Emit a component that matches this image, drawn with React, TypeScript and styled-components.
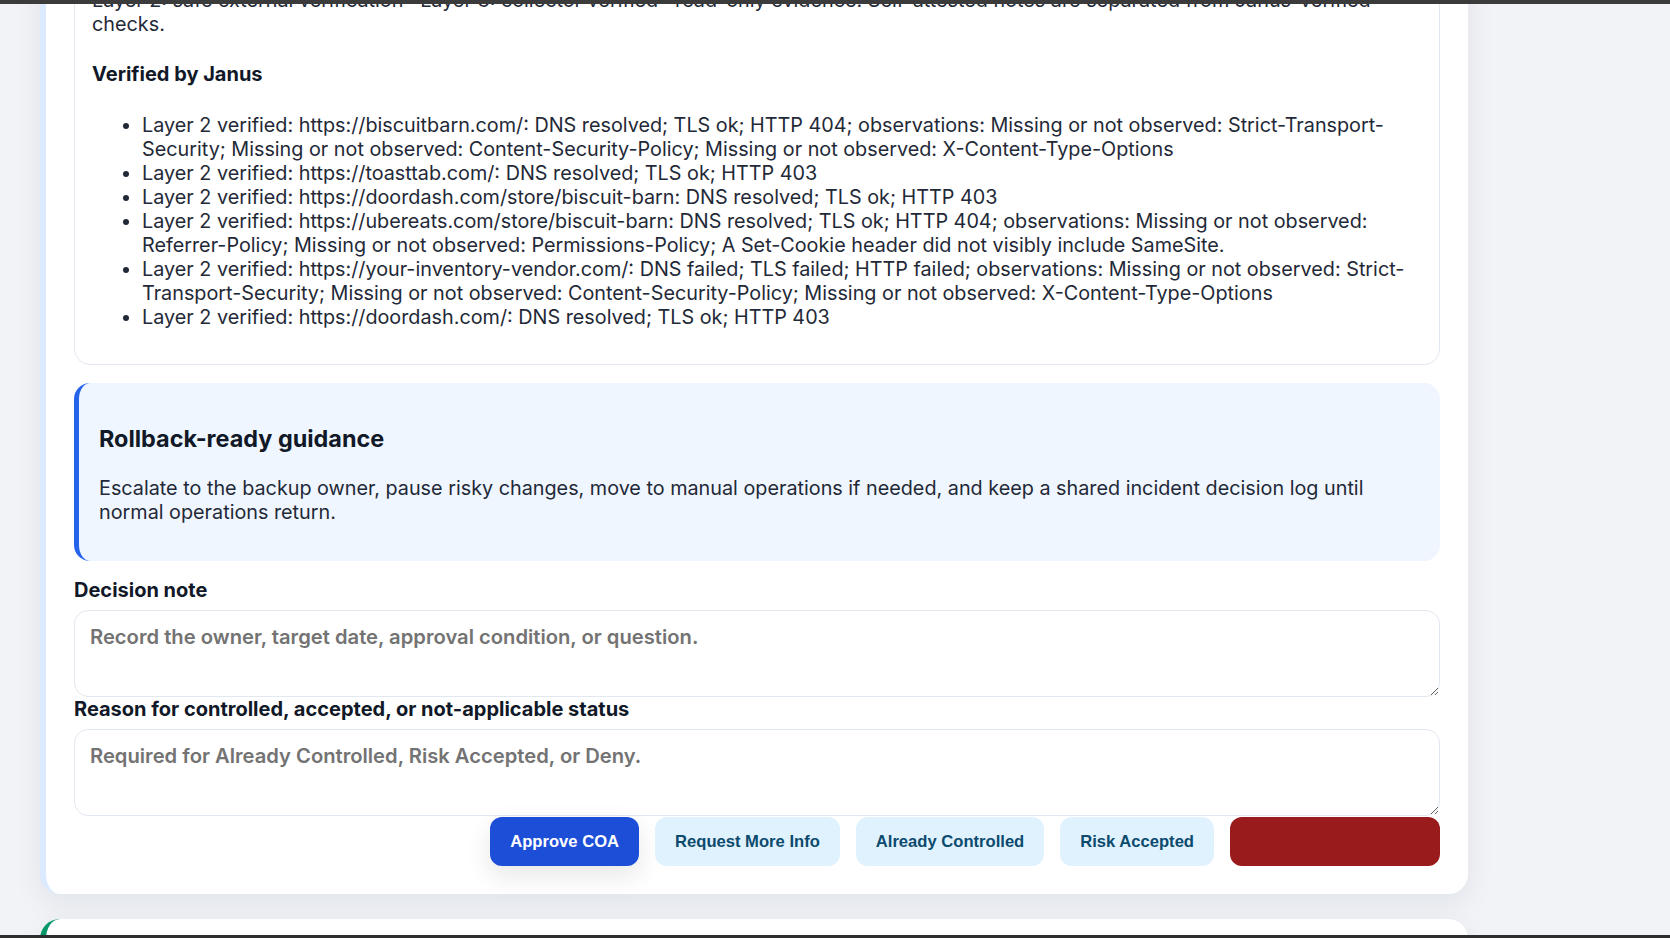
import React, { useLayoutEffect, useRef } from 'react';
import styled, { createGlobalStyle } from 'styled-components';

const GlobalStyle = createGlobalStyle`
  html {
    scrollbar-width: none;
  }
  html::-webkit-scrollbar {
    display: none;
  }
  * {
    box-sizing: border-box;
  }
  body {
    margin: 0;
    background: #f1f3f7;
    color: #1f2937;
    font-family: Inter, "Noto Sans", sans-serif;
    font-size: 19.8px;
    line-height: 24px;
  }
`;

const TopEdge = styled.div`
  position: fixed;
  top: 0;
  left: 0;
  right: 0;
  height: 4px;
  background: #3b3b3b;
  z-index: 10;
`;

const BottomEdge = styled.div`
  position: fixed;
  bottom: 0;
  left: 0;
  right: 0;
  height: 3px;
  background: #2e2e2e;
  z-index: 10;
`;

const Page = styled.main`
  display: flex;
  flex-direction: column;
  gap: 25px;
  width: 1468px;
  padding: 24px 0 40px 40px;
`;

const Card = styled.section<{ accent: string }>`
  display: flex;
  flex-direction: column;
  background: #ffffff;
  border-left: 6px solid ${p => p.accent};
  border-radius: 20px;
  padding: 28px 28px 28px 28px;
  box-shadow: 0 10px 30px rgba(15, 23, 42, 0.07);
`;

const CardTitle = styled.h2`
  margin: 0 0 8px;
  font-size: 26px;
  line-height: 32px;
  font-weight: 700;
  color: #111827;
`;

const CardMeta = styled.p`
  margin: 0 0 20px;
  color: #4b5563;
`;

const EvidencePanel = styled.div`
  border: 1px solid #e2e8f0;
  border-radius: 16px;
  padding: 18px 17px 35px;
`;

const PanelTitle = styled.h4`
  margin: 0 0 16px;
  font-size: 20px;
  font-weight: 700;
  color: #111827;
`;

const Intro = styled.p`
  margin: 0;
`;

const SubHeading = styled.h4`
  margin: 26px 0 27px;
  font-size: 20px;
  line-height: 24px;
  font-weight: 700;
  color: #111827;
`;

const CheckList = styled.ul`
  margin: 0;
  padding-left: 50px;
`;

const Callout = styled.div`
  margin: 18px 0 17px;
  background: #eff6ff;
  border-left: 5px solid #2563eb;
  border-radius: 16px;
  padding: 42px 24px 37px 20px;
`;

const CalloutTitle = styled.h3`
  margin: 0 0 23px;
  font-size: 23.4px;
  line-height: 28px;
  font-weight: 700;
  color: #111827;
`;

const CalloutText = styled.p`
  margin: 0;
`;

const Field = styled.label`
  display: flex;
  flex-direction: column;
  gap: 8px;
  font-size: 20px;
  font-weight: 700;
  color: #111827;
`;

const NoteInput = styled.textarea`
  height: 87px;
  border: 1px solid #e2e8f0;
  border-radius: 14px;
  padding: 14px 15px;
  font: inherit;
  font-size: 20.2px;
  font-weight: 600;
  color: #1f2937;
  background: #ffffff;
  resize: vertical;
  outline: none;

  &::placeholder {
    color: #737373;
  }
`;

const Actions = styled.div`
  display: flex;
  justify-content: flex-end;
  gap: 16px;
  margin-top: 1px;
`;

type Tone = 'primary' | 'soft' | 'danger';

const tones: Record<Tone, { bg: string; fg: string; shadow: string }> = {
  primary: { bg: '#1d4ed8', fg: '#ffffff', shadow: '0 10px 26px rgba(15, 23, 42, 0.10)' },
  soft: { bg: '#e0f2fe', fg: '#0c4a6e', shadow: 'none' },
  danger: { bg: '#991b1b', fg: '#991b1b', shadow: 'none' },
};

const ActionButton = styled.button<{ tone: Tone; wide?: boolean }>`
  height: 49px;
  min-width: ${p => (p.wide ? '210px' : '0')};
  padding: 0 20px;
  border: none;
  border-radius: 12px;
  background: ${p => tones[p.tone].bg};
  color: ${p => tones[p.tone].fg};
  box-shadow: ${p => tones[p.tone].shadow};
  font-family: "Liberation Sans", Arial, sans-serif;
  font-size: 16.6px;
  font-weight: 700;
  cursor: pointer;
`;

const checks = [
  'Layer 2 verified: https://biscuitbarn.com/: DNS resolved; TLS ok; HTTP 404; observations: Missing or not observed: Strict-Transport-Security; Missing or not observed: Content-Security-Policy; Missing or not observed: X-Content-Type-Options',
  'Layer 2 verified: https://toasttab.com/: DNS resolved; TLS ok; HTTP 403',
  'Layer 2 verified: https://doordash.com/store/biscuit-barn: DNS resolved; TLS ok; HTTP 403',
  'Layer 2 verified: https://ubereats.com/store/biscuit-barn: DNS resolved; TLS ok; HTTP 404; observations: Missing or not observed: Referrer-Policy; Missing or not observed: Permissions-Policy; A Set-Cookie header did not visibly include SameSite.',
  'Layer 2 verified: https://your-inventory-vendor.com/: DNS failed; TLS failed; HTTP failed; observations: Missing or not observed: Strict-Transport-Security; Missing or not observed: Content-Security-Policy; Missing or not observed: X-Content-Type-Options',
  'Layer 2 verified: https://doordash.com/: DNS resolved; TLS ok; HTTP 403',
];

export default function App() {
  const introRef = useRef<HTMLParagraphElement>(null);

  // the view is scrolled so that the intro paragraph's first line sits under the top edge
  useLayoutEffect(() => {
    const el = introRef.current;
    if (!el) return;
    const top = el.getBoundingClientRect().top + window.scrollY;
    window.scrollTo(0, top + 12);
  }, []);

  return (
    <>
      <GlobalStyle />
      <TopEdge />
      <Page>
        <Card accent="#dbeafe">
          <CardTitle>Keep ordering channels running during a vendor outage</CardTitle>
          <CardMeta>Course of action · owner review required</CardMeta>
          <EvidencePanel>
            <PanelTitle>Evidence</PanelTitle>
            <Intro ref={introRef}>
              Layer 2: safe external verification · Layer 3: collector verified · read-only evidence. Self-attested notes are separated from Janus-verified checks.
            </Intro>
            <SubHeading>Verified by Janus</SubHeading>
            <CheckList>
              {checks.map(c => (
                <li key={c}>{c}</li>
              ))}
            </CheckList>
          </EvidencePanel>

          <Callout>
            <CalloutTitle>Rollback-ready guidance</CalloutTitle>
            <CalloutText>
              Escalate to the backup owner, pause risky changes, move to manual operations if needed, and keep a shared incident decision log until normal operations return.
            </CalloutText>
          </Callout>

          <Field>
            Decision note
            <NoteInput placeholder="Record the owner, target date, approval condition, or question." />
          </Field>
          <Field>
            Reason for controlled, accepted, or not-applicable status
            <NoteInput placeholder="Required for Already Controlled, Risk Accepted, or Deny." />
          </Field>

          <Actions>
            <ActionButton tone="primary">Approve COA</ActionButton>
            <ActionButton tone="soft">Request More Info</ActionButton>
            <ActionButton tone="soft">Already Controlled</ActionButton>
            <ActionButton tone="soft">Risk Accepted</ActionButton>
            <ActionButton tone="danger" wide>Deny</ActionButton>
          </Actions>
        </Card>

        <Card accent="#059669">
          <CardTitle>Restore payment terminal access with a verified fallback</CardTitle>
          <CardMeta>Course of action · ready for approval</CardMeta>
          <EvidencePanel>
            <Intro>Layer 2: safe external verification · read-only evidence.</Intro>
          </EvidencePanel>
        </Card>
      </Page>
      <BottomEdge />
    </>
  );
}
